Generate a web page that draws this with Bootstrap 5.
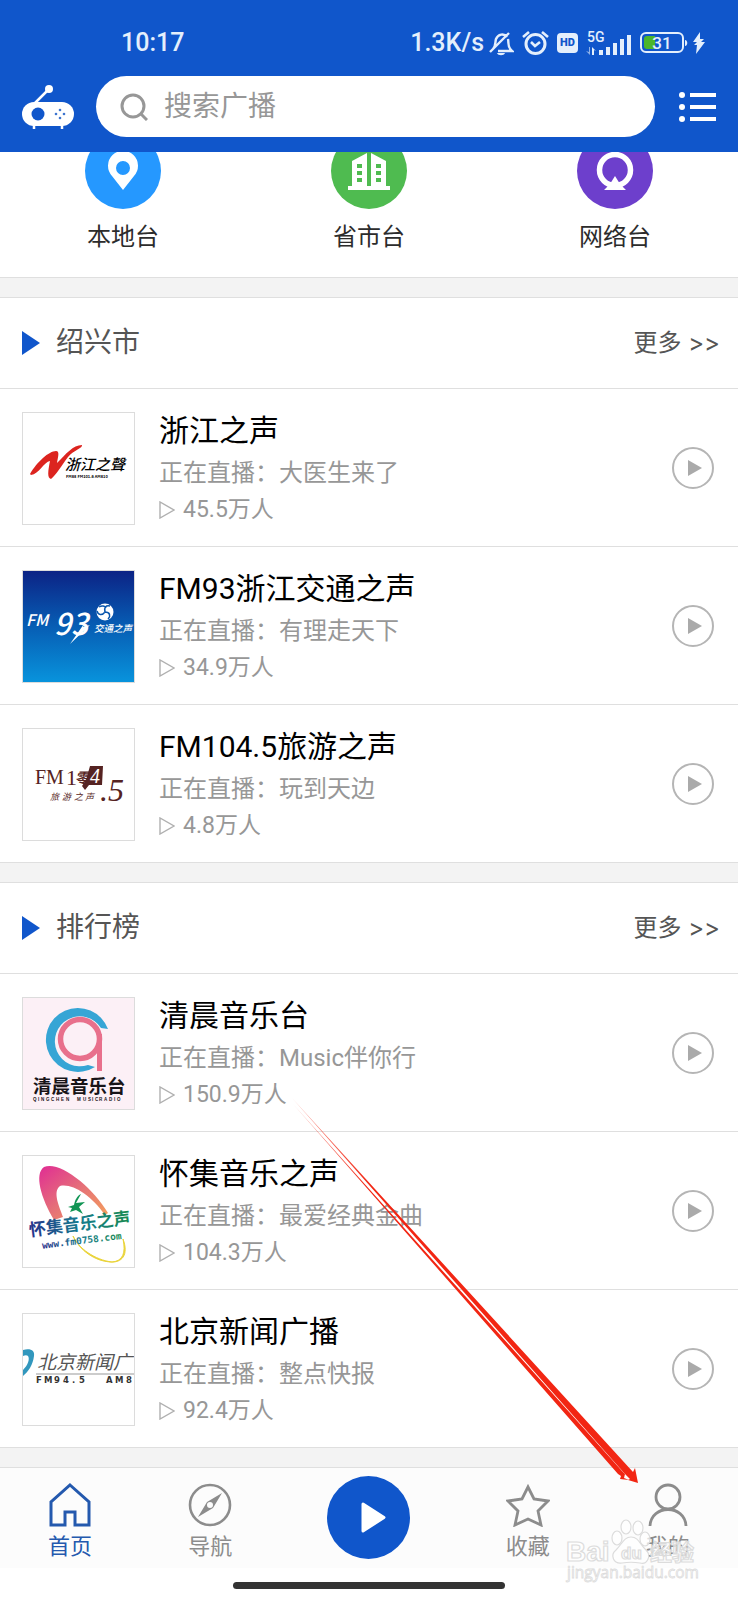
<!DOCTYPE html>
<html lang="zh-CN">
<head>
<meta charset="utf-8">
<meta name="viewport" content="width=device-width, initial-scale=1">
<title>广播</title>
<link href="https://cdn.jsdelivr.net/npm/bootstrap@5.3.0/dist/css/bootstrap.min.css" rel="stylesheet">
<style>
  :root { --brand: #1056cb; --line: #dfdfdf; --muted: #979797; }
  body { font-family: Roboto, "Noto Sans CJK SC", sans-serif; background: #fff; color: #000; }
  a { text-decoration: none; color: inherit; }
  svg { display: block; flex: none; }
  svg text { font-family: "Noto Sans CJK SC", sans-serif; }
  .top-area { background: var(--brand); color: #fff; height: 152px; }
  .status-row { height: 76px; padding: 10px 33px 0 121px; font-size: 25px; font-weight: 500; color: #e4effc; line-height: 40px; }
  .hd-tag { width: 21px; height: 20px; border-radius: 4px; background: #e4effc; color: var(--brand); font-size: 11px; font-weight: 900; line-height: 20px; text-align: center; }
  .search-row { padding: 0 22px; }
  .search-pill { height: 61px; border-radius: 31px; background: #fff; padding: 0 24px; margin: 0 24px 0 22px; }
  .search-pill input { font-size: 28px; line-height: 40px; color: #333; outline: 0; min-width: 0; }
  .search-pill input::placeholder { color: var(--muted); opacity: 1; }
  .shortcuts { height: 125px; overflow: hidden; }
  .shortcuts a { margin-top: -19px; font-size: 24px; line-height: 36px; color: #2c2c2c; }
  .shortcuts svg { margin: 0 auto 10px; }
  .divider { height: 21px; background: #f3f3f3; border: solid var(--line); border-width: 1px 0; }
  .section-head { height: 90px; padding: 0 18px 0 22px; color: #555; }
  .section-head h2 { font-size: 28px; line-height: 40px; }
  .section-head a { font-family: Inter, "Noto Sans CJK SC", sans-serif; font-size: 24px; line-height: 36px; }
  .station { border-top: 1px solid var(--line); padding: 23px 23px 22px 22px; height: 158px; }
  .cover { width: 113px; height: 113px; border: 1px solid #dcdcdc; overflow: hidden; flex: none; }
  .station h3 { font-size: 30px; line-height: 42px; }
  .station p { font-size: 24px; line-height: 42px; color: var(--muted); }
  .station .listeners { font-size: 23px; line-height: 32px; }
  .tab-area { background: #fcfcfc; height: 100px; }
  .tab-area a { font-size: 22px; line-height: 30px; color: #8c8c8c; padding-top: 15px; }
  .tab-area svg { margin: 0 auto 5px; }
  .tab-area a.current { color: #2459ae; }
  .play-col { width: 24%; flex: none; padding-top: 8px; }
  .home-wrap { padding: 14px 0 11px; }
  .home-bar { width: 272px; height: 7px; border-radius: 4px; background: #333; }
  .pointer-arrow { left: 0; top: 0; width: 100%; pointer-events: none; z-index: 5; }
  .watermark { right: 34px; top: 48px; pointer-events: none; }
</style>
</head>
<body>
<svg width="0" height="0" class="position-absolute" aria-hidden="true">
  <symbol id="play-ring" viewBox="0 0 44 44"><circle cx="22" cy="22" r="20" fill="none" stroke="#b5b5b5" stroke-width="2"/><path d="M17 14v16l14-8z" fill="#aaa"/></symbol>
  <symbol id="play-small" viewBox="0 0 16 18"><path d="M1 1v16l14-8z" fill="none" stroke="#b0b0b0" stroke-width="1.4"/></symbol>
</svg>

<div class="position-relative">
<header class="top-area">
  <div class="status-row d-flex align-items-center">
    <span>10:17</span>
    <span class="ms-auto me-1">1.3K/s</span>
    <svg width="26" height="26" viewBox="0 0 26 26" fill="none" stroke="#e4effc" stroke-width="2.4"><path d="M2 22 21 3M5 19c3-3 2-7 3-10 2-5 8-6 11-2M20 9c1 4-1 8 4 12H10"/><path d="M9 23h8c-1 3-7 3-8 0z" fill="#e4effc" stroke="none"/></svg>
    <svg class="ms-2" width="27" height="26" viewBox="0 0 27 26" fill="none" stroke="#e4effc" stroke-width="3"><circle cx="13.500" cy="14" r="9.500"/><path d="M1 7l6-5M26 7l-6-5M9 12l4 4 5-4" stroke-width="2.600"/></svg>
    <span class="hd-tag ms-2">HD</span>
    <svg class="ms-2" width="46" height="26" viewBox="0 0 46 26" fill="#e4effc"><text x="1" y="12" font-size="14" font-weight="500" style="font-family:Roboto,sans-serif">5G</text><path d="M13 25v-5h4v5zM20 25v-8h4v8zM27 25V13h4v12zM34 25V9h4v16zM41 25V5h4v20z"/><path d="M6 17v8h2v-5l2 1z"/><path d="M4 25v-8H3v5l-3-1z" opacity=".6"/></svg>
    <svg class="ms-2" width="49" height="22" viewBox="0 0 49 22"><rect x="1" y="1" width="42" height="19" rx="5" fill="none" stroke="#e4effc" stroke-width="2"/><path d="M7 4h8v13H7a3 3 0 0 1-3-3V7a3 3 0 0 1 3-3z" fill="#4bb52b"/><text x="22" y="17" font-size="17" fill="#e4effc" text-anchor="middle" style="font-family:Roboto,sans-serif">31</text><path d="M45 8c3 0 3 6 0 6z" fill="#e4effc"/></svg>
    <svg class="ms-1" width="12" height="22" viewBox="0 0 12 22"><path d="M7 0 0 10h4l-3 3h3l-1 9 9-12H8l3-3H7z" fill="#e4effc"/></svg>
  </div>
  <div class="search-row d-flex align-items-center">
    <a href="#" aria-label="收音机"><svg width="52" height="46" viewBox="0 0 52 46"><path d="M13 19 27 5" stroke="#fff" stroke-width="2.500"/><circle cx="27" cy="5" r="4" fill="#fff"/><rect y="18" width="52" height="24" rx="12" fill="#fff"/><path d="M12 41v4M40 41v4" stroke="#fff" stroke-width="2.500"/><circle cx="16" cy="30" r="6.500" fill="#1056cb"/><g fill="#3c74cf"><circle cx="38" cy="26" r="1.300"/><circle cx="38" cy="34" r="1.300"/><circle cx="34" cy="30" r="1.300"/><circle cx="42" cy="30" r="1.300"/></g></svg></a>
    <label class="search-pill d-flex align-items-center flex-grow-1 gap-3">
      <svg width="28" height="28" viewBox="0 0 28 28" fill="none" stroke="#979797" stroke-width="3"><circle cx="13" cy="13" r="11"/><path d="m20 20 7 7"/></svg>
      <input type="search" class="border-0 bg-transparent flex-grow-1 p-0" placeholder="搜索广播" aria-label="搜索广播">
    </label>
    <button type="button" class="btn p-0 border-0" aria-label="菜单"><svg width="37" height="32" viewBox="0 0 37 32" fill="#fff"><circle cx="3" cy="4" r="3"/><circle cx="3" cy="16" r="3"/><circle cx="3" cy="28" r="3"/><path d="M11 2h26v4H11zM11 14h26v4H11zM11 26h26v4H11z"/></svg></button>
  </div>
</header>

<nav class="shortcuts row g-0 text-center" aria-label="分类">
  <a class="col-4" href="#"><svg width="76" height="76" viewBox="0 0 76 76"><circle cx="38" cy="38" r="38" fill="#2598ff"/><path fill-rule="evenodd" fill="#fff" d="M38 57 27 43a15 15 0 1 1 22 0zM38 28a7 7 0 1 0 0 14 7 7 0 0 0 0-14z"/></svg>本地台</a>
  <a class="col-4" href="#"><svg width="76" height="76" viewBox="0 0 76 76"><circle cx="38" cy="38" r="38" fill="#4fbb50"/><path d="M17 53h4V28l15-8v33h4V20l15 8v25h4v4H17z" fill="#fff"/><path d="M26 31h5v4h-5zM26 38h5v4h-5zM26 45h5v4h-5zM45 31h5v4h-5zM45 38h5v4h-5zM45 45h5v4h-5z" fill="#4fbb50"/></svg>省市台</a>
  <a class="col-4" href="#"><svg width="76" height="76" viewBox="0 0 76 76"><circle cx="38" cy="38" r="38" fill="#6d3fcc"/><circle cx="38" cy="37" r="15.500" fill="none" stroke="#fff" stroke-width="5.500"/><path d="m38 43 5 8 6 6H27l6-6z" fill="#fff"/></svg>网络台</a>
</nav>

<main>
<div class="divider"></div>
<section>
  <div class="section-head d-flex align-items-center">
    <svg width="18" height="24" viewBox="0 0 18 24"><path d="M0 0v24l18-12z" fill="#1056cb"/></svg>
    <h2 class="mb-0 ms-3 fw-normal">绍兴市</h2><a class="ms-auto" href="#">更多 &gt;&gt;</a>
  </div>
  <article class="station d-flex align-items-center">
    <div class="cover"><svg width="111" height="111" viewBox="0 0 111 111"><path d="M7 61C14 49 26 38 33 38c4 0 2 6 1 12 9-9 16-18 25-18 1 3-8 5-14 12-6 8-12 18-17 22-4-1-3-8-1-18-6 1-11 13-19 14z" fill="#dc241f"/><text x="42" y="57" font-size="15" font-weight="500" font-style="italic">浙江之聲</text><text x="43" y="65" font-size="4" font-weight="700">FM88 FM101.6 AM810</text></svg></div>
    <div class="ms-4 flex-grow-1"><h3 class="mb-0 fw-normal">浙江之声</h3><p class="mb-0">正在直播：大医生来了</p><p class="listeners mb-0 d-flex align-items-center gap-2"><svg width="16" height="18"><use href="#play-small"/></svg>45.5万人</p></div>
    <button type="button" class="btn border-0 p-0" aria-label="播放浙江之声"><svg width="44" height="44"><use href="#play-ring"/></svg></button>
  </article>
  <article class="station d-flex align-items-center">
    <div class="cover"><svg width="111" height="111" viewBox="0 0 111 111"><defs><linearGradient id="sky" x2="0" y2="1"><stop stop-color="#0c2385"/><stop offset=".45" stop-color="#0758b0"/><stop offset="1" stop-color="#0893dc"/></linearGradient></defs><path d="M0 0h111v111H0z" fill="url(#sky)"/><g fill="#fff" font-style="italic"><text x="3" y="55" font-size="16" font-weight="500">FM</text><text x="31" y="64" font-size="30" font-weight="500">93</text><text x="71" y="61" font-size="9.500" font-weight="500">交通之声</text></g><path d="m47 73 20-19-7 2 3-6z" fill="#fff"/><circle cx="82" cy="41" r="8.500" fill="#fff"/><path d="M82 41c-1-5 1-7 5-6M82 41c5 0 6 4 3 7M82 41c-3 4-7 3-8-1M76 36c3-2 6-1 7 1" fill="none" stroke="#0855ac" stroke-width="1.500"/></svg></div>
    <div class="ms-4 flex-grow-1"><h3 class="mb-0 fw-normal">FM93浙江交通之声</h3><p class="mb-0">正在直播：有理走天下</p><p class="listeners mb-0 d-flex align-items-center gap-2"><svg width="16" height="18"><use href="#play-small"/></svg>34.9万人</p></div>
    <button type="button" class="btn border-0 p-0" aria-label="播放FM93浙江交通之声"><svg width="44" height="44"><use href="#play-ring"/></svg></button>
  </article>
  <article class="station d-flex align-items-center">
    <div class="cover"><svg width="111" height="111" viewBox="0 0 111 111"><path d="M67 37h13l-1 19H66l-4 5-3-4 4-6z" fill="#552322"/><g fill="#552322"><text x="12" y="55" font-size="20" style="font-family:'Liberation Serif',serif">FM</text><text x="43" y="56" font-size="22" style="font-family:'Liberation Serif',serif">1</text><text x="52" y="54" font-size="14" font-weight="700" font-style="italic">零</text><text x="77" y="72" font-size="32" font-style="italic" style="font-family:'Liberation Serif',serif">.5</text><text x="27 39 51 62" y="71" font-size="9" font-style="italic">旅游之声</text></g><text x="67" y="54" font-size="20" font-style="italic" fill="#fff" style="font-family:'Liberation Serif',serif">4</text></svg></div>
    <div class="ms-4 flex-grow-1"><h3 class="mb-0 fw-normal">FM104.5旅游之声</h3><p class="mb-0">正在直播：玩到天边</p><p class="listeners mb-0 d-flex align-items-center gap-2"><svg width="16" height="18"><use href="#play-small"/></svg>4.8万人</p></div>
    <button type="button" class="btn border-0 p-0" aria-label="播放FM104.5旅游之声"><svg width="44" height="44"><use href="#play-ring"/></svg></button>
  </article>
</section>

<div class="divider"></div>
<section>
  <div class="section-head d-flex align-items-center">
    <svg width="18" height="24" viewBox="0 0 18 24"><path d="M0 0v24l18-12z" fill="#1056cb"/></svg>
    <h2 class="mb-0 ms-3 fw-normal">排行榜</h2><a class="ms-auto" href="#">更多 &gt;&gt;</a>
  </div>
  <article class="station d-flex align-items-center">
    <div class="cover"><svg width="111" height="111" viewBox="0 0 111 111"><path d="M0 0h111v111H0z" fill="#fcf0f6"/><path d="M85 31l-7-1A25 25 0 1 0 65 67l7 2A32 32 0 1 1 85 31z" fill="#36a5d5"/><circle cx="57" cy="41" r="19.500" fill="none" stroke="#e8708c" stroke-width="5.500"/><path d="M74 36h5v37h-5z" fill="#e8708c"/><text x="10" y="95" font-size="18.500" font-weight="700" fill="#181418">清晨音乐台</text><g font-size="4.500" font-weight="700" fill="#181418" style="font-family:'Liberation Sans',sans-serif"><text x="10 15 18 23 28 33 38 43" y="103" style="font-family:inherit">QINGCHEN</text><text x="54 60 65 69 72 76 81 86 91 94" y="103" style="font-family:inherit">MUSICRADIO</text></g></svg></div>
    <div class="ms-4 flex-grow-1"><h3 class="mb-0 fw-normal">清晨音乐台</h3><p class="mb-0">正在直播：Music伴你行</p><p class="listeners mb-0 d-flex align-items-center gap-2"><svg width="16" height="18"><use href="#play-small"/></svg>150.9万人</p></div>
    <button type="button" class="btn border-0 p-0" aria-label="播放清晨音乐台"><svg width="44" height="44"><use href="#play-ring"/></svg></button>
  </article>
  <article class="station d-flex align-items-center">
    <div class="cover"><svg width="111" height="111" viewBox="0 0 111 111"><defs><linearGradient id="ribbon" x2="1" y2="1"><stop stop-color="#e02c94"/><stop offset=".5" stop-color="#e57078"/><stop offset="1" stop-color="#f5a25a"/></linearGradient><linearGradient id="name"><stop stop-color="#24338b"/><stop offset=".5" stop-color="#167b8e"/><stop offset="1" stop-color="#188b51"/></linearGradient></defs><path d="M31 64C18 42 11 18 21 11c15-7 49 20 64 46l-3 2C68 39 49 27 37 30c-8 6 0 22 3 31z" fill="url(#ribbon)"/><path d="M50 80c5 12 22 24 39 26 11-1 14-9 11-23 6 16-1 24-13 23-15-1-30-11-37-26z" fill="#ead43a" stroke="#ead43a"/><path d="m58 38-5 9 9-1-6 5 4 7-7-4-6 2 2-4-4-1 6-2c1-5 3-9 7-11z" fill="#119554"/><g transform="rotate(-7 8 82)" fill="url(#name)"><text x="7" y="80" font-size="17" font-weight="700">怀集音乐之声</text><text x="18" y="94" font-size="9.500" font-weight="700" style="font-family:'DejaVu Sans Mono',monospace">www.fm0758.com</text></g></svg></div>
    <div class="ms-4 flex-grow-1"><h3 class="mb-0 fw-normal">怀集音乐之声</h3><p class="mb-0">正在直播：最爱经典金曲</p><p class="listeners mb-0 d-flex align-items-center gap-2"><svg width="16" height="18"><use href="#play-small"/></svg>104.3万人</p></div>
    <button type="button" class="btn border-0 p-0" aria-label="播放怀集音乐之声"><svg width="44" height="44"><use href="#play-ring"/></svg></button>
  </article>
  <article class="station d-flex align-items-center">
    <div class="cover"><svg width="111" height="111" viewBox="0 0 111 111"><path d="M0 36c8-2 12 1 11 6-1 9-6 16-11 20v-6c5-5 7-11 5-14-1-1-3-1-5 0z" fill="#3297bd"/><text x="14" y="55" font-size="19" font-style="italic" fill="#555">北京新闻广</text><path d="M13 60h98" stroke="#999"/><g font-size="8.500" font-weight="700" fill="#333"><text x="13 21 31 40 49 56" y="69" style="font-family:'DejaVu Sans',sans-serif">FM94.5</text><text x="83 92 103" y="69" style="font-family:'DejaVu Sans',sans-serif">AM8</text></g></svg></div>
    <div class="ms-4 flex-grow-1"><h3 class="mb-0 fw-normal">北京新闻广播</h3><p class="mb-0">正在直播：整点快报</p><p class="listeners mb-0 d-flex align-items-center gap-2"><svg width="16" height="18"><use href="#play-small"/></svg>92.4万人</p></div>
    <button type="button" class="btn border-0 p-0" aria-label="播放北京新闻广播"><svg width="44" height="44"><use href="#play-ring"/></svg></button>
  </article>
</section>
<div class="divider"></div>
</main>

<footer class="position-relative">
  <nav class="tab-area d-flex text-center" aria-label="主导航">
    <a class="col current" href="#" aria-current="page"><svg width="44" height="44" viewBox="0 0 44 44" fill="none" stroke="#2459ae" stroke-width="3"><path d="M22 2 41 19v23H27V29H17v13H3V19z"/></svg>首页</a>
    <a class="col" href="#"><svg width="44" height="44" viewBox="0 0 44 44"><circle cx="22" cy="22" r="20" fill="none" stroke="#8c8c8c" stroke-width="2.600"/><path fill-rule="evenodd" d="M34 10 25 25 10 34l9-15zM22 19a3 3 0 1 0 0 6 3 3 0 0 0 0-6z" fill="#8c8c8c"/></svg>导航</a>
    <div class="play-col"><button type="button" class="btn border-0 p-0 rounded-circle" aria-label="播放"><svg class="m-0" width="83" height="83" viewBox="0 0 83 83"><circle cx="41.500" cy="41.500" r="41.500" fill="#1056cb"/><path d="M36 28v27l21-13.500z" fill="#fff" stroke="#fff" stroke-width="3" stroke-linejoin="round"/></svg></button></div>
    <a class="col" href="#"><svg width="44" height="44" viewBox="0 0 44 44" fill="none" stroke="#8c8c8c" stroke-width="2.800"><path d="m22 4 6 12 14 2-10 10 3 14-13-6-13 6 3-14L2 18l14-2z"/></svg>收藏</a>
    <a class="col" href="#"><svg width="44" height="44" viewBox="0 0 44 44" fill="none" stroke="#8c8c8c" stroke-width="2.800"><circle cx="22" cy="14" r="12"/><path d="M4 43c1-22 35-22 36 0"/></svg>我的</a>
  </nav>
  <svg class="watermark position-absolute" width="140" height="70" viewBox="0 0 140 70" fill="#fff" fill-opacity=".7" stroke="#dcdcdc" stroke-width="1.200"><g font-weight="700"><text x="2" y="45" font-size="28" style="font-family:'Liberation Sans',sans-serif">Bai</text><ellipse cx="53" cy="22" rx="5" ry="7"/><ellipse cx="62" cy="11" rx="5" ry="7"/><ellipse cx="74" cy="12" rx="5" ry="7"/><ellipse cx="81" cy="23" rx="5" ry="7"/><path d="M67 21c8 0 9 8 15 13 6 6 1 15-6 13-6-1-12-1-18 0-9 1-12-8-6-13 6-6 8-13 15-13z"/><text x="57" y="43" font-size="17" style="font-family:'Liberation Sans',sans-serif">du</text><text x="86" y="44" font-size="22">经验</text></g><text x="3" y="62" font-size="15.500" stroke-width=".8" style="font-family:'Open Sans',sans-serif">jingyan.baidu.com</text></svg>
  <div class="home-wrap d-flex justify-content-center"><div class="home-bar"></div></div>
</footer>

<svg class="pointer-arrow position-absolute" viewBox="0 0 738 1600" aria-hidden="true"><defs><linearGradient id="fade" gradientUnits="userSpaceOnUse" x1="292" y1="1098" x2="370" y2="1184"><stop stop-color="#f22613" stop-opacity=".4"/><stop offset="1" stop-color="#f22613"/></linearGradient></defs><g fill="url(#fade)"><path d="m292 1098 341 374 2-4 3 15-10-3 2-1-5-5z"/><path d="m293 1104 329 367 3 3-1 4 5 2-9-1 1-3-3-2z"/></g></svg>
</div>
<script src="https://cdn.jsdelivr.net/npm/bootstrap@5.3.0/dist/js/bootstrap.bundle.min.js"></script>
</body>
</html>
